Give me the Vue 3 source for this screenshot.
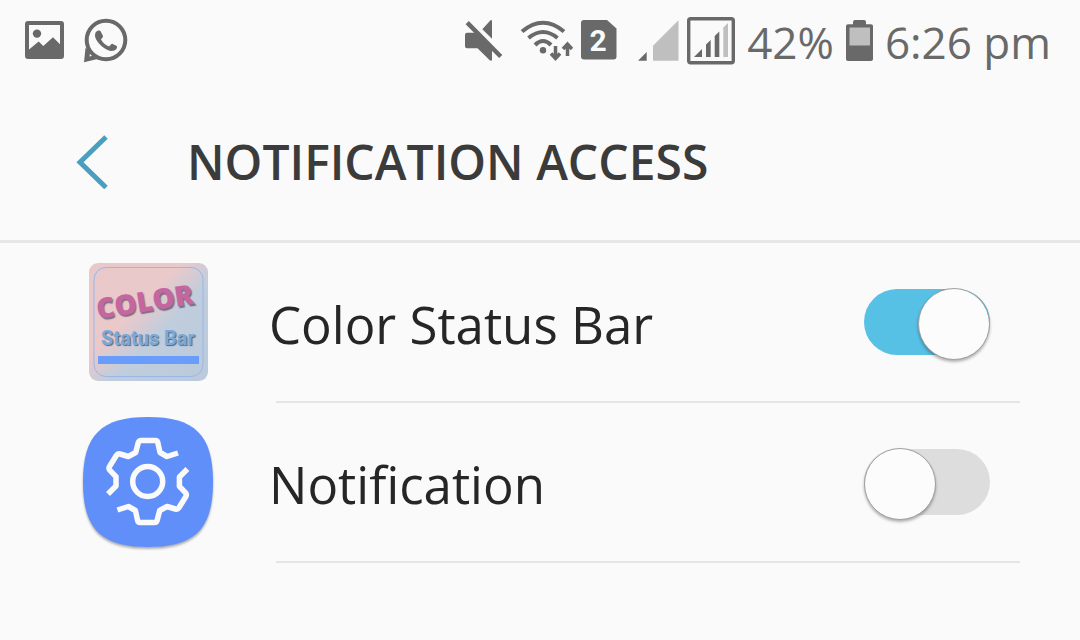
<template>
  <div class="screen">
    <div class="status-bar">
      <div class="status-group">
        <svg class="status-icon" width="39" height="48" viewBox="0 0 39 48" aria-hidden="true">
          <path fill-rule="evenodd" d="M3 4h33a3 3 0 0 1 3 3v32a3 3 0 0 1-3 3H3a3 3 0 0 1-3-3V7a3 3 0 0 1 3-3ZM4 8v24.5l9.7-8 4.6 4.5 9.7-8.7 7 7V8Z" />
          <circle cx="12" cy="16.6" r="4.2" />
        </svg>
        <svg class="status-icon" width="44" height="48" viewBox="0 0 44 48" aria-hidden="true">
          <circle cx="22" cy="23" r="19.3" fill="none" stroke="#696969" stroke-width="4" />
          <path d="M1.500 31 0 45.300 13.500 42 12 38 5.500 39.500 6.500 33Z" />
          <path d="M12.200 14.700C14 12.900 16.500 13.200 17 15l2 4c.4 1.400-1.600 2.400-2 3.600 1.800 3.200 4.600 5.800 8 7 1.200-.6 2.200-3.200 3.700-2.700l4 2.100c1.200 1-.5 4-2.500 4.600-3.200 1.200-8.200-.6-12.200-4.100-4-3.500-7-8-7-10.700 0-1.900.3-3.100 1.200-4.100Z" />
        </svg>
      </div>
      <div class="status-group right">
        <svg class="status-icon" width="48" height="48" viewBox="0 0 48 48" aria-hidden="true">
          <path d="M3 15.7h10L28 31v12.5h-2L13.5 31.3H3a2 2 0 0 1-2-2V17.7a2 2 0 0 1 2-2ZM28 3.3v18.4l-9.7-9.4L26.5 3.3Z" />
          <path d="M3.2 5.7 36.7 39.5" stroke="#696969" stroke-width="4.5" />
        </svg>
        <svg class="status-icon" width="53" height="48" viewBox="0 0 53 48" aria-hidden="true">
          <g fill="none" stroke="#696969" stroke-width="4">
            <path d="M2 14.5Q23-3 44 14.5M8.5 21Q23 9 37.5 21M15 28Q23 20 31 28" />
            <path d="M35.5 29V41M31 36.5 35.5 41.5 40 36.5M47.5 39V28M43 32 47.5 27 52 32" stroke-width="3.5" />
          </g>
          <circle cx="23" cy="33.3" r="3.2" />
        </svg>
        <svg class="status-icon" width="36" height="48" viewBox="0 0 36 48">
          <path d="M3 3h23l9.5 8.5v28a3 3 0 0 1-3 3H3a3 3 0 0 1-3-3V6a3 3 0 0 1 3-3Z" />
          <text class="sim-number" x="17" y="34" text-anchor="middle">2</text>
        </svg>
        <svg class="status-icon" width="54" height="48" viewBox="0 0 54 48" aria-hidden="true">
          <path d="M13 43.7h8.7V35Z" />
          <path d="M28 43.7V28.7L53.5 3.3V43.7Z" fill="#bfbfbf" />
        </svg>
        <svg class="status-icon" width="48" height="48" viewBox="0 0 48 48" aria-hidden="true">
          <rect x="1.7" y="1.7" width="44.6" height="44" rx="2" fill="none" stroke="#696969" stroke-width="3.4" />
          <path d="M7 40h8v-8ZM19 40V27.5l4.700-4.500V40ZM27.700 40V19l4.600-4.500V40Z" />
          <path d="M36.3 40V10.5L41 6v34Z" fill="#bfbfbf" />
        </svg>
        <span class="status-text">{{ battery }}%</span>
        <svg class="status-icon" width="27" height="48" viewBox="0 0 27 48" aria-hidden="true">
          <path d="M7 7.3V5a2 2 0 0 1 2-2h9a2 2 0 0 1 2 2v2.300h5a2 2 0 0 1 2 2V42a2 2 0 0 1-2 2H2a2 2 0 0 1-2-2V9.300a2 2 0 0 1 2-2Z" />
          <path d="M3.5 10.5h20.500v18H3.500Z" fill="#bfbfbf" />
        </svg>
        <span class="status-text">{{ time }}</span>
      </div>
    </div>

    <header class="header">
      <button class="back-button" type="button" aria-label="Back">
        <svg width="34" height="54" viewBox="0 0 34 54" aria-hidden="true">
          <path d="M30 2 4 27.2 30 52.5" fill="none" stroke="#4a9fc0" stroke-width="5" />
        </svg>
      </button>
      <h1>NOTIFICATION ACCESS</h1>
    </header>

    <ul class="app-list">
      <li v-for="app in apps" :key="app.id">
        <div class="row">
          <div class="app-icon">
            <svg v-if="app.id === 'color-status-bar'" width="119" height="118" viewBox="0 0 119 118" aria-hidden="true">
              <defs>
                <linearGradient id="tile" x1="0.1" y1="0.1" x2="0.9" y2="0.9">
                  <stop offset="0" stop-color="#e9c8ca" />
                  <stop offset="0.36" stop-color="#eac9ca" />
                  <stop offset="0.62" stop-color="#bfcddd" />
                  <stop offset="1" stop-color="#bccbdc" />
                </linearGradient>
              </defs>
              <rect width="119" height="118" rx="9" fill="url(#tile)" />
              <rect x="5" y="4.5" width="109" height="109" rx="12" fill="none" stroke="#9ab5e8" />
              <text class="tile-title" x="9" y="56" transform="rotate(-9 9 56)">COLOR</text>
              <text class="tile-subtitle" x="59" y="82" text-anchor="middle">Status Bar</text>
              <rect x="9" y="93" width="101" height="8" fill="#6a9cfb" />
            </svg>
            <svg v-else class="settings-icon" width="130" height="130" viewBox="0 0 130 130" aria-hidden="true">
              <path d="M65 0C112 0 130 18 130 65S112 130 65 130 0 112 0 65 18 0 65 0Z" fill="#608ffa" />
              <g fill="none" stroke="#fafafa" stroke-width="5.5" stroke-linejoin="round">
                <circle cx="64.7" cy="64.500" r="15" />
                <path :d="gear" />
                <path :d="gear" transform="rotate(180 64.7 64.5)" />
              </g>
            </svg>
          </div>
          <label :for="app.id">{{ app.name }}</label>
          <input :id="app.id" v-model="app.enabled" class="switch" type="checkbox" role="switch" />
        </div>
        <hr />
      </li>
    </ul>
  </div>
</template>

<script setup>
import { reactive } from 'vue'

const battery = 42
const time = '6:26 pm'

const apps = reactive([
  { id: 'color-status-bar', name: 'Color Status Bar', enabled: true },
  { id: 'notification', name: 'Notification', enabled: false }
])

// one half of the gear outline, the other half is the same path turned around
const gear = 'M95 36 84 39.5 77 35.5 74.8 25.5Q74.3 23.5 72.5 23.5H58Q56 23.5 55.3 25.5L52.7 35.5 45.3 39.5 37 37Q34.7 36.4 33.5 38.2L26.5 49.5Q25.5 51.3 26.5 52.8L33 59.700V69L25 77'
</script>

<style>
body { margin: 0; background: #fafafa; }
</style>

<style scoped>
.screen { min-height: 100vh; background: #fafafa; color: #262626; font-family: "Open Sans", "Noto Sans", sans-serif; }
.status-bar { display: flex; align-items: center; justify-content: space-between; height: 82px; padding: 0 25px; color: #696969; }
.status-group { display: flex; align-items: center; gap: 20px; }
.status-group.right { gap: 8px; }
.status-icon { display: block; flex: none; fill: #696969; }
.status-text { padding: 2px 4px 0; font-size: 44px; line-height: 48px; white-space: nowrap; }
.sim-number { fill: #fafafa; font-family: Roboto, sans-serif; font-size: 30px; font-weight: 700; }
.header { display: flex; align-items: center; gap: 77px; height: 156px; padding: 2px 76px 0; border-bottom: 3px solid #e6e6e6; }
.back-button { display: block; padding: 0; border: 0; background: none; cursor: pointer; }
.back-button svg { display: block; }
h1 { margin: 0; color: #3b3b3b; font-size: 48px; font-weight: 600; line-height: 64px; white-space: nowrap; }
.app-list { margin: 0; padding: 0; list-style: none; }
.row { display: flex; align-items: center; height: 158px; padding: 0 90px 0 83px; }
.app-icon { display: flex; justify-content: center; flex: none; width: 130px; }
.app-icon svg { display: block; overflow: visible; }
.settings-icon { filter: drop-shadow(0 2px 1px rgba(0, 0, 0, 0.3)); }
.tile-title { fill: #c466a0; font-size: 28px; font-weight: 800; text-shadow: 1px 2px 1px rgba(60, 50, 80, 0.6); }
.tile-subtitle { fill: #79a9d8; font-family: Roboto, sans-serif; font-size: 20px; font-weight: 700; text-shadow: 1px 1px 1px rgba(40, 60, 90, 0.7); }
label { flex: 1; padding: 4px 0 0 56px; font-size: 51px; line-height: 68px; cursor: pointer; }
hr { height: 2px; margin: 0 60px 0 276px; border: 0; background: #e5e5e5; }
.switch { position: relative; appearance: none; flex: none; width: 126px; height: 66px; margin: 0; border-radius: 33px; background: #dddddd; cursor: pointer; }
.switch::before { content: ""; position: absolute; top: -1px; left: 0; box-sizing: border-box; width: 72px; height: 72px; border: 1px solid #a0a0a0; border-radius: 50%; background: #fcfcfc; box-shadow: 0 2px 3px rgba(0, 0, 0, 0.3); }
.switch:checked { background: #57c0e5; }
.switch:checked::before { right: 0; left: auto; }
</style>
